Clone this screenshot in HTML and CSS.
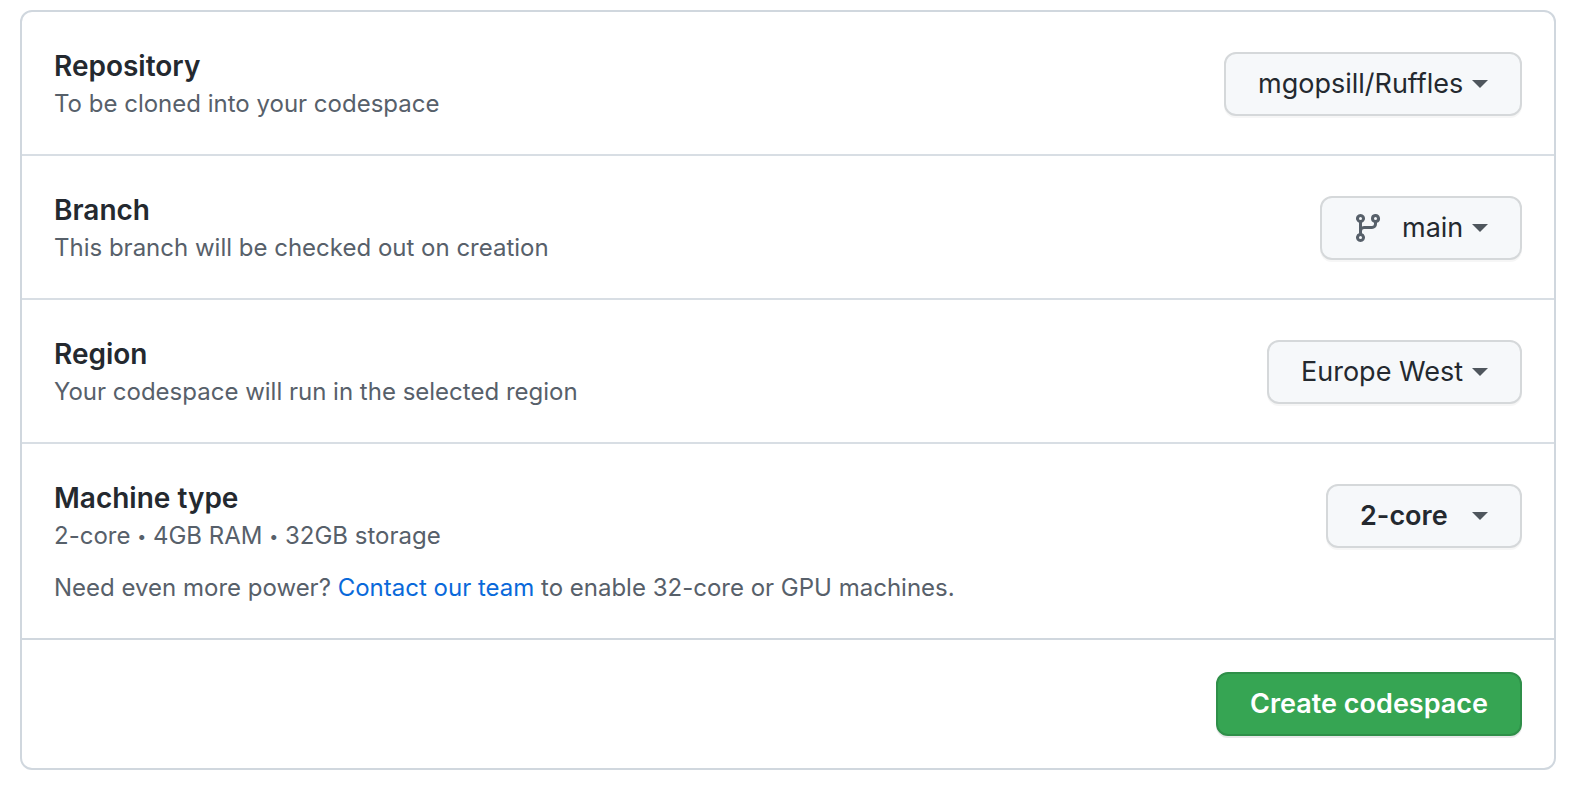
FILE: index.html
```html
<!DOCTYPE html>
<html lang="en">
<head>
  <meta charset="UTF-8">
  <title>Create codespace</title>
  <meta name="viewport" content="width=device-width,initial-scale=1.0">
  <link rel="stylesheet" href="styles.css">
</head>
<body>
  <form class="box">
    <div class="row">
      <div class="info">
        <label class="title" for="repository">Repository</label>
        <p class="note">To be cloned into your codespace</p>
      </div>
      <div class="picker">
        <select id="repository" class="btn">
          <option>mgopsill/Ruffles</option>
        </select>
      </div>
    </div>

    <div class="row">
      <div class="info">
        <label class="title" for="branch">Branch</label>
        <p class="note">This branch will be checked out on creation</p>
      </div>
      <div class="picker picker-branch">
        <svg class="branch-icon" viewBox="0 0 16 16" aria-hidden="true">
          <path fill-rule="evenodd" d="M11.75 2.5a.75.75 0 100 1.5.75.75 0 000-1.5zm-2.25.75a2.25 2.25 0 113 2.122V6A2.5 2.5 0 0110 8.5H6a1 1 0 00-1 1v1.128a2.251 2.251 0 11-1.5 0V5.372a2.25 2.25 0 111.5 0v1.836A2.492 2.492 0 016 7h4a1 1 0 001-1v-.628A2.25 2.25 0 019.5 3.25zM4.25 12a.75.75 0 100 1.5.75.75 0 000-1.5zM3.5 3.25a.75.75 0 111.5 0 .75.75 0 01-1.5 0z"/>
        </svg>
        <select id="branch" class="btn">
          <option>main</option>
        </select>
      </div>
    </div>

    <div class="row">
      <div class="info">
        <label class="title" for="region">Region</label>
        <p class="note">Your codespace will run in the selected region</p>
      </div>
      <div class="picker">
        <select id="region" class="btn">
          <option>Europe West</option>
        </select>
      </div>
    </div>

    <div class="row row-last">
      <div class="info">
        <label class="title" for="machine">Machine type</label>
        <p class="note">2-core <span class="dot">•</span> 4GB RAM <span class="dot">•</span> 32GB storage</p>
        <p class="note more">Need even more power? <a href="#contact">Contact our team</a> to enable 32-core or GPU machines.</p>
      </div>
      <div class="picker picker-machine">
        <select id="machine" class="btn">
          <option>2-core</option>
        </select>
      </div>
    </div>

    <div class="footer">
      <button type="submit" class="btn btn-primary">Create codespace</button>
    </div>
  </form>
</body>
</html>
```
FILE: styles.css
```css
*{box-sizing:border-box;}
body{
  margin:0;padding:10px 14px 16px 20px;background:#fff;color:#24292f;
  font-family:Inter,"Noto Sans",sans-serif;
}

.box{border:2px solid #d0d7de;border-radius:12px;}

/* rows */
.row{
  display:flex;align-items:flex-start;justify-content:space-between;gap:32px;
  padding:32px;border-bottom:2px solid #d8dee4;
}
.row-last{border-bottom-color:#d0d7de;}
.title{display:block;margin-bottom:-2px;font-size:28px;line-height:44px;font-weight:600;}
.note{margin:0;font-size:24px;line-height:36px;color:#57606a;}
.dot{font-size:16px;line-height:1;vertical-align:2px;}
.more{margin-top:16px;}
a{color:#0969da;text-decoration:none;}
a:hover{text-decoration:underline;}

/* buttons */
.btn{
  display:block;height:64px;margin:0;padding:0 32px;
  border:2px solid #d5d8da;border-radius:12px;
  background:#f6f8fa;color:#24292f;
  font:400 27px/40px Inter,"Noto Sans",sans-serif;
  box-shadow:0 2px 0 rgba(27,31,36,.04);
  appearance:none;cursor:pointer;
}
.btn:hover{background-color:#f3f4f6;}
.btn-primary{
  border-color:#2f8f49;background:#36a553;color:#fff;font-weight:600;
  box-shadow:0 2px 0 rgba(27,31,36,.1);
}
.btn-primary:hover{background-color:#2c974b;}

/* drop-downs */
.picker{position:relative;flex:none;margin-top:8px;}
.picker .btn{padding-right:56px;}
.picker::after{
  content:"";position:absolute;right:34px;top:28px;
  border:8px solid transparent;border-top-color:#4f565d;border-bottom:0;
  pointer-events:none;
}
.picker-branch .btn{padding-left:80px;}
.branch-icon{
  position:absolute;left:32px;top:16px;width:32px;height:32px;
  fill:#57606a;pointer-events:none;
}
.picker-machine .btn{padding-right:72px;font-weight:600;}

.footer{display:flex;justify-content:flex-end;padding:32px;}
```
